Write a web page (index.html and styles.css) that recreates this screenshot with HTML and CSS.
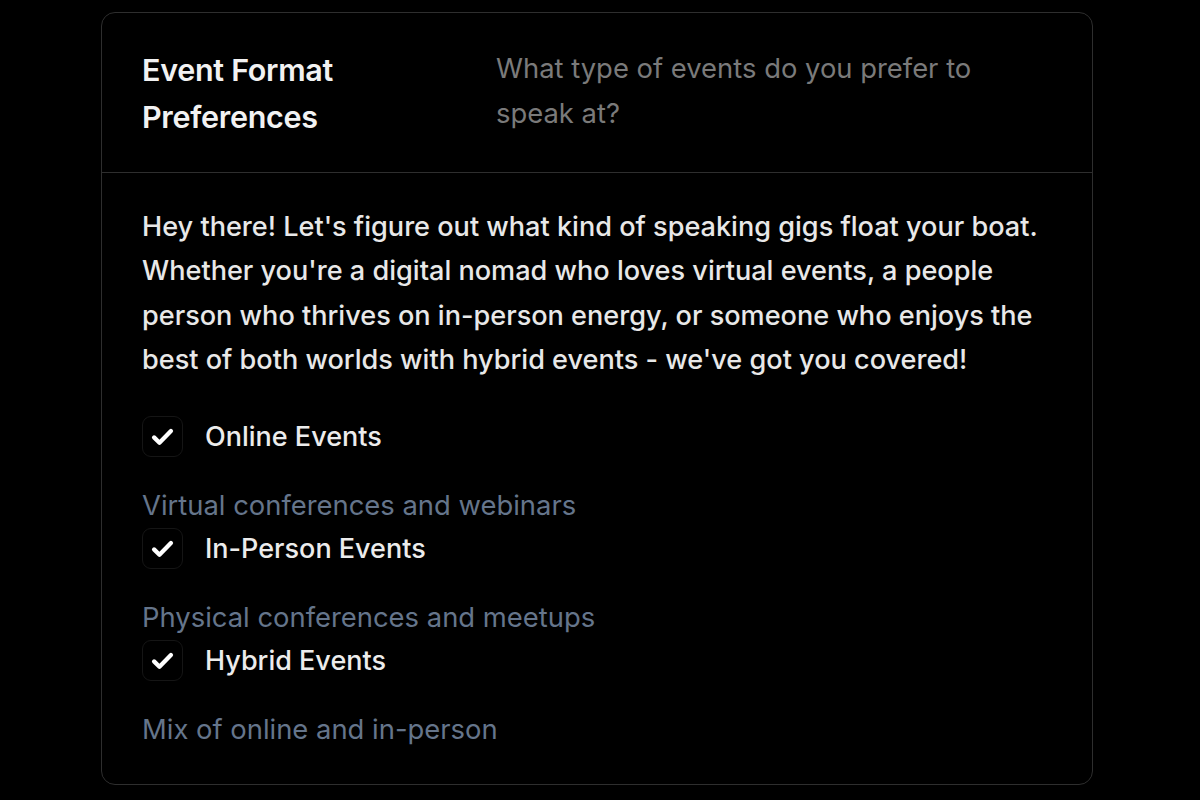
FILE: index.html
```html
<!DOCTYPE html>
<html lang="en">
<head>
<meta charset="utf-8">
<title>Event Format Preferences</title>
<link rel="stylesheet" href="styles.css">
</head>
<body>
<div class="page">
  <section class="card">
    <header class="card-header">
      <h2 class="title">Event Format Preferences</h2>
      <p class="subtitle">What type of events do you prefer to speak at?</p>
    </header>
    <div class="card-body">
      <p class="intro">Hey there! Let's figure out what kind of speaking gigs float your boat. Whether you're a digital nomad who loves virtual events, a people person who thrives on in-person energy, or someone who enjoys the best of both worlds with hybrid events - we've got you covered!</p>
      <ul class="options">
        <li class="option">
          <label class="option-row">
            <span class="check"><svg viewBox="0 0 24 24" width="27" height="27"><path d="M4.5 12.8l4.8 4.7L19.5 7.2" fill="none" stroke="#fff" stroke-width="3.8" stroke-linecap="round" stroke-linejoin="round"/></svg></span>
            <span class="option-label">Online Events</span>
          </label>
          <p class="option-desc">Virtual conferences and webinars</p>
        </li>
        <li class="option">
          <label class="option-row">
            <span class="check"><svg viewBox="0 0 24 24" width="27" height="27"><path d="M4.5 12.8l4.8 4.7L19.5 7.2" fill="none" stroke="#fff" stroke-width="3.8" stroke-linecap="round" stroke-linejoin="round"/></svg></span>
            <span class="option-label">In-Person Events</span>
          </label>
          <p class="option-desc">Physical conferences and meetups</p>
        </li>
        <li class="option">
          <label class="option-row">
            <span class="check"><svg viewBox="0 0 24 24" width="27" height="27"><path d="M4.5 12.8l4.8 4.7L19.5 7.2" fill="none" stroke="#fff" stroke-width="3.8" stroke-linecap="round" stroke-linejoin="round"/></svg></span>
            <span class="option-label">Hybrid Events</span>
          </label>
          <p class="option-desc">Mix of online and in-person</p>
        </li>
      </ul>
    </div>
  </section>
</div>
</body>
</html>
```

FILE: styles.css
```css
* { box-sizing: border-box; }
html, body {
  margin: 0;
  padding: 0;
  background: #000;
  font-family: Inter, "Noto Sans", sans-serif;
}
.page {
  padding: 12px 108px 16px 101px;
}
.card {
  width: 992px;
  border: 1.5px solid #2e2e2e;
  border-radius: 14px;
  background: #000;
}
.card-header {
  display: grid;
  grid-template-columns: 354px 1fr;
  padding: 33px 40px 32px 40px;
  border-bottom: 1.5px solid #2e2e2e;
}
.title {
  margin: 0;
  font-size: 30.5px;
  font-weight: 600;
  line-height: 47px;
  color: #f2f2f2;
  letter-spacing: -0.3px;
  width: 240px;
}
.subtitle {
  margin: 0;
  font-size: 27.4px;
  line-height: 45px;
  color: #7a7a7a;
  width: 500px;
}
.card-body {
  padding: 32px 40px 38px 40px;
}
.intro {
  margin: 0;
  font-size: 27.1px;
  font-weight: 500;
  line-height: 44.4px;
  color: #e8e8e8;
}
.options {
  list-style: none;
  margin: 33px 0 0 0;
  padding: 0;
}
.option-row {
  display: flex;
  align-items: center;
  gap: 22px;
}
.check {
  width: 41px;
  height: 41px;
  border: 1px solid #151515;
  border-radius: 9px;
  display: flex;
  align-items: center;
  justify-content: center;
}
.option-label {
  font-size: 27px;
  font-weight: 500;
  color: #ececec;
}
.option-desc {
  margin: 31px 0 6px 0;
  font-size: 27.4px;
  line-height: 34px;
  color: #65758b;
}
.option:last-child .option-desc { margin-bottom: 0; }
```
